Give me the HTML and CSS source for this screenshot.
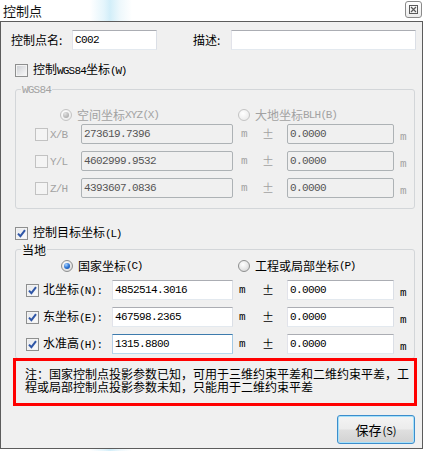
FILE: index.html
```html
<!DOCTYPE html>
<html lang="zh-CN">
<head>
<meta charset="utf-8">
<title>控制点</title>
<link rel="stylesheet" href="styles.css">
</head>
<body>
<div class="titlebar">
  <span class="title">控制点</span>
  <span class="close">
    <svg width="9" height="9" viewBox="0 0 9 9"><rect x="0.5" y="0.5" width="8" height="8" fill="none" stroke="#5a5a5a"/><path d="M2 2 L7 7 M7 2 L2 7" stroke="#5a5a5a" stroke-width="1.2"/></svg>
  </span>
</div>
<div class="frame">
  <div class="row-top">
    <span class="name-lbl">控制点名:</span>
    <div class="tb w-name">C002</div>
    <span class="desc-lbl">描述:</span>
    <div class="tb w-desc"></div>
  </div>

  <div class="chk-row">
    <span class="cb"></span>
    <span class="chk-text">控制<span class="lat">WGS84</span>坐标<span class="lat acc">(W)</span></span>
  </div>

  <fieldset class="group wgs">
    <legend class="dis-t"><span class="lat">WGS84</span></legend>
    <div class="radio-row">
      <div class="ritem first dis-t"><span class="rb dis sel"></span>空间坐标<span class="lat">XYZ</span><span class="lat acc">(X)</span></div>
      <div class="ritem dis-t"><span class="rb dis"></span>大地坐标<span class="lat">BLH</span><span class="lat acc">(B)</span></div>
    </div>
    <div class="crow first">
      <span class="cb dis"></span>
      <span class="clbl dis-t"><span class="lat">X/B</span></span>
      <div class="tb dis w-wv">273619.7396</div>
      <span class="m dis-t">m</span><span class="pm dis-t">±</span>
      <div class="tb dis w-err">0.0000</div>
      <span class="m2 dis-t">m</span>
    </div>
    <div class="crow">
      <span class="cb dis"></span>
      <span class="clbl dis-t"><span class="lat">Y/L</span></span>
      <div class="tb dis w-wv">4602999.9532</div>
      <span class="m dis-t">m</span><span class="pm dis-t">±</span>
      <div class="tb dis w-err">0.0000</div>
      <span class="m2 dis-t">m</span>
    </div>
    <div class="crow">
      <span class="cb dis"></span>
      <span class="clbl dis-t"><span class="lat">Z/H</span></span>
      <div class="tb dis w-wv">4393607.0836</div>
      <span class="m dis-t">m</span><span class="pm dis-t">±</span>
      <div class="tb dis w-err">0.0000</div>
      <span class="m2 dis-t">m</span>
    </div>
  </fieldset>

  <div class="chk-row second">
    <span class="cb on"><svg width="9" height="9" viewBox="0 0 9 9"><path d="M1 4.6 L3.4 7.2 L8 1.2" fill="none" stroke="#2f56a6" stroke-width="2"/></svg></span>
    <span class="chk-text">控制目标坐标<span class="lat acc">(L)</span></span>
  </div>

  <fieldset class="group local">
    <legend>当地</legend>
    <div class="radio-row">
      <div class="ritem first"><span class="rb sel"></span>国家坐标<span class="lat acc">(C)</span></div>
      <div class="ritem"><span class="rb"></span>工程或局部坐标<span class="lat acc">(P)</span></div>
    </div>
    <div class="crow first">
      <span class="cb on"><svg width="9" height="9" viewBox="0 0 9 9"><path d="M1 4.6 L3.4 7.2 L8 1.2" fill="none" stroke="#2f56a6" stroke-width="2"/></svg></span>
      <span class="clbl">北坐标<span class="lat">(N):</span></span>
      <div class="tb w-lv">4852514.3016</div>
      <span class="m">m</span><span class="pm">±</span>
      <div class="tb w-err">0.0000</div>
      <span class="m2">m</span>
    </div>
    <div class="crow">
      <span class="cb on"><svg width="9" height="9" viewBox="0 0 9 9"><path d="M1 4.6 L3.4 7.2 L8 1.2" fill="none" stroke="#2f56a6" stroke-width="2"/></svg></span>
      <span class="clbl">东坐标<span class="lat">(E):</span></span>
      <div class="tb w-lv">467598.2365</div>
      <span class="m">m</span><span class="pm">±</span>
      <div class="tb w-err">0.0000</div>
      <span class="m2">m</span>
    </div>
    <div class="crow">
      <span class="cb on"><svg width="9" height="9" viewBox="0 0 9 9"><path d="M1 4.6 L3.4 7.2 L8 1.2" fill="none" stroke="#2f56a6" stroke-width="2"/></svg></span>
      <span class="clbl">水准高<span class="lat">(H):</span></span>
      <div class="tb w-lv focus">1315.8800</div>
      <span class="m">m</span><span class="pm">±</span>
      <div class="tb w-err">0.0000</div>
      <span class="m2">m</span>
    </div>
  </fieldset>

  <div class="note">注：国家控制点投影参数已知，可用于三维约束平差和二维约束平差，工程或局部控制点投影参数未知，只能用于二维约束平差</div>

  <div class="btn-row">
    <div class="btn">保存<span class="acc-btn">(S)</span></div>
  </div>
</div>
</body>
</html>
```
FILE: styles.css
```css
* { box-sizing: border-box; }
html, body { margin: 0; padding: 0; }
body {
  width: 425px;
  height: 451px;
  overflow: hidden;
  background: linear-gradient(90deg, #ffffff 0, #ffffff 90px, #e4f5fc 104px, #d2eef9 110px, #eef8fc 120px, #ffffff 132px, #ffffff 100%);
  font-family: "Noto Sans CJK SC", "Noto Sans", sans-serif;
  font-size: 12px;
  color: #000;
}

.titlebar {
  height: 21px;
  display: flex;
  align-items: center;
  justify-content: space-between;
  padding: 0 3px 0 3px;
}
.title { font-size: 13px; line-height: 15px; color: #111; }
.close {
  width: 17px;
  height: 17px;
  border: 1px solid #8a8a8a;
  border-radius: 3px;
  background: linear-gradient(#ffffff, #ececec);
  display: flex;
  align-items: center;
  justify-content: center;
  margin-top: -2px;
}

.frame {
  width: 423px;
  height: 428px;
  border: 1px solid #5c5c5c;
  background: #f0f0f0;
}

.lat {
  font-family: "Liberation Mono", monospace;
  font-size: 11px;
  letter-spacing: -0.8px;
}
.acc { letter-spacing: -1.2px; }
.dis-t { color: #a2a2a2; }

.row-top {
  display: flex;
  align-items: center;
  height: 20px;
  margin-top: 8px;
  padding-left: 10px;
}
.name-lbl { width: 61px; line-height: 14px; }
.desc-lbl { width: 38px; margin-left: 36px; line-height: 14px; }

.tb {
  height: 20px;
  border: 1px solid;
  border-color: #abadb3 #dbdfe6 #e3e9ef #e2e3ea;
  background: #fff;
  padding-left: 2px;
  display: flex;
  align-items: center;
  font-family: "Liberation Mono", monospace;
  font-size: 11px;
  letter-spacing: -0.6px;
  color: #000;
  flex: none;
}
.tb.dis {
  background: #f0f0f0;
  border-color: #adb2b5;
  border-radius: 2px;
  color: #555;
}
.tb.focus { border-color: #3d7bad #a4c9e3 #b7d9ed #b5cfe7; }
.w-name { width: 85px; }
.w-desc { width: 185px; }
.w-wv { width: 152px; }
.w-lv { width: 121px; }
.w-err { width: 107px; }

.chk-row {
  display: flex;
  align-items: center;
  height: 20px;
  margin-top: 10px;
  padding-left: 14px;
}
.chk-row.second { margin-top: 14px; }
.chk-text { margin-left: 5px; line-height: 14px; }

.cb {
  width: 13px;
  height: 13px;
  flex: none;
  border: 1px solid #8e8f8f;
  background: linear-gradient(135deg, #c9ccd1 0%, #e6e7e9 55%, #fbfbfb 100%);
  box-shadow: inset 0 0 0 1px #f3f3f3;
  display: flex;
  align-items: center;
  justify-content: center;
}
.cb.on { background: linear-gradient(135deg, #e4e6ea, #fdfdfd); }
.cb.dis { border-color: #c2c2c2; background: #f4f4f4; box-shadow: none; }

fieldset.group {
  margin: 1px 0 0 14px;
  width: 400px;
  min-width: 0;
  padding: 0 0 10px 0;
  border: 1px solid #d3d6d9;
  border-radius: 3px;
}
fieldset.group legend {
  margin-left: 5px;
  padding: 0 1px;
  font-size: 12px;
  line-height: 13px;
}
fieldset.local { margin-top: 0; padding-bottom: 4px; }

.radio-row {
  display: flex;
  align-items: center;
  height: 16px;
  margin-top: 10px;
  padding-left: 44px;
}
.local .radio-row { margin-top: 2px; padding-left: 45px; }
.ritem { display: flex; align-items: center; line-height: 14px; }
.ritem.first { width: 178px; }
.local .ritem.first { width: 177px; }

.rb {
  width: 12px;
  height: 12px;
  border-radius: 50%;
  margin-right: 5px;
  flex: none;
  border: 1px solid #8e8f8f;
  background: radial-gradient(circle at 40% 35%, #ffffff 0%, #e9e9e9 50%, #cfcfcf 100%);
}
.rb.sel::after {
  content: "";
  display: block;
  width: 6px;
  height: 6px;
  margin: 2px;
  border-radius: 50%;
  background: radial-gradient(circle at 35% 30%, #a9d3ff 0%, #2f77d6 50%, #123f8f 100%);
}
.rb.dis { border-color: #c4c4c4; background: radial-gradient(circle at 40% 35%, #ffffff, #e6e6e6); }
.rb.dis.sel::after { background: radial-gradient(circle at 35% 30%, #e2e2e2, #9c9c9c); }

.crow {
  display: flex;
  align-items: center;
  height: 20px;
  margin-top: 7px;
}
.crow.first { margin-top: 1px; }
.wgs .crow { padding-left: 19px; }
.local .crow { padding-left: 10px; }
.local .crow.first { margin-top: 6px; }

.clbl { line-height: 14px; flex: none; }
.wgs .clbl { width: 33px; padding-left: 2px; }
.local .clbl { width: 73px; padding-left: 4px; }

.m { width: 29px; padding-left: 8px; font-family: "Liberation Mono", monospace; font-size: 11px; flex: none; }
.local .m { padding-left: 6px; }
.pm { width: 25px; font-size: 12px; line-height: 14px; flex: none; }
.m2 { margin-left: 6px; padding-top: 5px; font-family: "Liberation Mono", monospace; font-size: 11px; }

.note {
  position: relative;
  margin: -1px 0 0 12px;
  width: 404px;
  height: 48px;
  border: 3px solid #ff0000;
  padding: 6px 0 0 9px;
  font-size: 12px;
  line-height: 13px;
  background: #f0f0f0;
}

.btn-row { display: flex; justify-content: flex-end; padding-right: 7px; margin-top: 9px; }
.btn {
  width: 78px;
  height: 29px;
  border: 1px solid #3c8dcc;
  border-radius: 3px;
  box-shadow: inset 0 0 0 1px #a6e1fa;
  background: linear-gradient(#f4f4f4 0%, #ececec 48%, #dfdfdf 52%, #d2d2d2 100%);
  display: flex;
  align-items: center;
  justify-content: center;
  font-size: 13px;
}
.acc-btn { font-size: 11px; margin-left: 1px; }
```
